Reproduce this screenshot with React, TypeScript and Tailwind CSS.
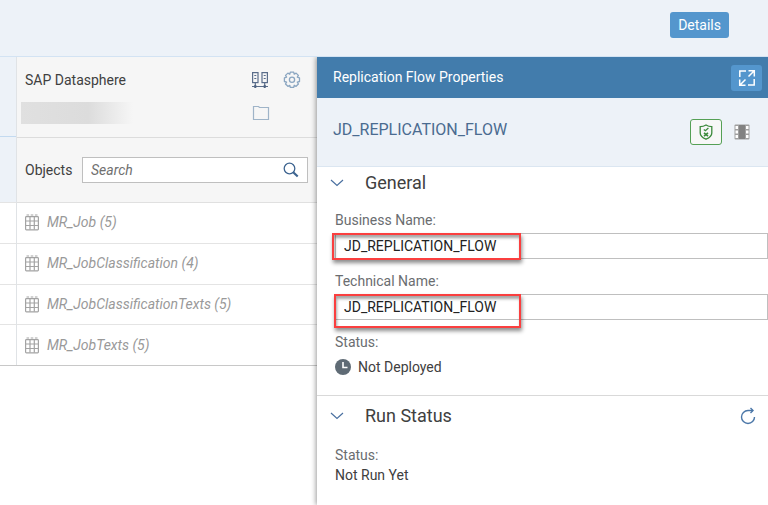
import type { ReactNode } from 'react'

const objects = ['MR_Job (5)', 'MR_JobClassification (4)', 'MR_JobClassificationTexts (5)', 'MR_JobTexts (5)']

function TableIcon() {
  return (
    <svg width="14" height="17" viewBox="0 0 14 17" fill="none" stroke="#a3a3a3" strokeWidth="1.2">
      <path d="M1.5 1h2.6M5.700 1h2.600M9.900 1h2.600" />
      <rect x="0.6" y="2.6" width="12.8" height="13.2" rx="0.8" />
      <path d="M0.5 7h13M0.5 11.500h13M5 2.600v13M9.300 2.600v13" />
    </svg>
  )
}

function ConnectionIcon() {
  return (
    <svg width="18" height="17" viewBox="0 0 18 17" fill="none" stroke="#5a6d8a" strokeWidth="1.2">
      <rect x="1.600" y="0.6" width="5.400" height="10" />
      <rect x="11" y="0.6" width="5.400" height="10" />
      <path d="M3.300 3.500h2M3.300 6.500h2M12.700 3.500h2M12.700 6.500h2M4.300 10.500v4M13.700 10.500v4M1 14.500h16" />
      <path d="M3.300 13h2v3h-2zM12.700 13h2v3h-2z" fill="#4f6380" stroke="none" />
    </svg>
  )
}

function GearIcon() {
  return (
    <svg width="18" height="18" viewBox="0 0 18 18" fill="none" stroke="#8ba6c1" strokeWidth="1.3" strokeLinejoin="round">
      <path d="M7.3 1.2h3.4l.5 2 1.9-1.1 2.3 2.3-1.1 1.8 2.2.7v3.6l-2.2.6 1.1 1.9-2.3 2.3-1.900-1-.5 2.100H7.300l-.5-2.100-1.900 1-2.400-2.300 1.100-1.900-2.200-.6V6.900l2.200-.7-1.100-1.800 2.400-2.300 1.900 1.100z" />
      <circle cx="9" cy="8.8" r="2.6" />
    </svg>
  )
}

function FolderIcon() {
  return (
    <svg width="18" height="16" viewBox="0 0 18 16" fill="none" stroke="#9fb4c8" strokeWidth="1.2">
      <path d="M1.500 14.500v-13h5l1 1h9v12z" />
    </svg>
  )
}

function SearchIcon() {
  return (
    <svg width="16" height="16" viewBox="0 0 16 16" fill="none" stroke="#3d6490">
      <circle cx="6.5" cy="6.5" r="5.3" strokeWidth="1.300" />
      <path d="M10.200 10.200l4.500 4.300" strokeWidth="2.200" />
    </svg>
  )
}

function ExpandIcon() {
  return (
    <svg width="18" height="18" viewBox="0 0 18 18" fill="none" stroke="#fff" strokeWidth="1.5">
      <path d="M8 2H1.800v6M10 16h6.200v-6" />
      <path d="M10.500 1.700h5.800v5.800M16 2l-5.500 5.500M7.500 16.300H1.700v-5.800M2 16l5.500-5.500" />
    </svg>
  )
}

function ShieldIcon() {
  return (
    <svg width="14" height="16" viewBox="0 0 14 16" fill="none" stroke="#3b8a3b" strokeWidth="1.3">
      <path d="M7 1c2 1.3 3.800 1.700 5.800 1.700V9c0 3-2.500 4.800-5.800 6.200C3.700 13.800 1.200 12 1.200 9V2.700C3.200 2.700 5 2.300 7 1z" />
      <path d="M4.800 5.400l1.600 1.300 3-2.700" />
      <path d="M5 8.800l4 3.400M9 8.800l-4 3.400" strokeWidth="1.600" />
    </svg>
  )
}

function FilmIcon() {
  return (
    <svg width="16" height="16" viewBox="0 0 16 16">
      <rect x="0.5" y="0.5" width="15" height="15" rx="1" fill="#a0a0a0" />
      <path d="M5 1h6v14H5z" fill="#828282" />
      <path d="M1.500 2h2.500v3H1.500zM1.500 6.500h2.500v3H1.500zM1.500 11h2.500v3H1.500zM12 2h2.500v3h-2.500zM12 6.500h2.500v3h-2.500zM12 11h2.500v3h-2.500z" fill="#fff" />
    </svg>
  )
}

function ChevronIcon() {
  return (
    <svg width="14" height="8" viewBox="0 0 14 8" fill="none" stroke="#4a70a0" strokeWidth="1.2">
      <path d="M1 1l6 5.500L13 1" />
    </svg>
  )
}

function RefreshIcon() {
  return (
    <svg width="16" height="18" viewBox="0 0 16 18" fill="none" stroke="#4b77a8" strokeWidth="1.4">
      <path d="M13 3.500H8a6.500 6.500 0 1 0 6.500 6.500" />
      <path d="M10.500 1l2.500 2.500L10.500 6" />
    </svg>
  )
}

function ClockIcon() {
  return (
    <svg width="16" height="16" viewBox="0 0 16 16">
      <circle cx="8" cy="8" r="8" fill="#5f6b75" />
      <path d="M8 3v5.500h4.500" fill="none" stroke="#fff" strokeWidth="1.6" />
    </svg>
  )
}

function SectionTitle({ title, children }: { title: string; children?: ReactNode }) {
  return (
    <div className="flex h-[31px] items-center px-3">
      <button aria-label={`Toggle ${title}`} className="flex w-4 justify-center">
        <ChevronIcon />
      </button>
      <h2 className="ml-5 flex-1 text-[18px] leading-6">{title}</h2>
      {children}
    </div>
  )
}

function Field({ id, label, mark }: { id: string; label: string; mark: string }) {
  return (
    <div className="flex flex-col">
      <label htmlFor={id} className="leading-5 text-[#6a6d70]">
        {label}
      </label>
      <div className="relative mt-[3px]">
        <input
          id={id}
          defaultValue="JD_REPLICATION_FLOW"
          className="block h-[26px] w-full border border-[#bfbfbf] bg-white px-2 text-[#222]"
        />
        <div className={mark} />
      </div>
    </div>
  )
}

export default function App() {
  return (
    <div className="flex min-h-screen flex-col bg-white font-['Roboto',sans-serif] text-[14px] text-[#404040]">
      <header className="flex h-[57px] items-start justify-end border-b border-[#d3e3f3] bg-[#edf2f8] pt-3 pr-[39px]">
        <button className="h-[26px] rounded-[3px] bg-[#5496cd] px-2 text-white">Details</button>
      </header>

      <div className="flex flex-1">
        <main className="flex w-[317px] shrink-0 flex-col">
          <div className="flex border-b border-[#c8c8c8]">
            {/* Source column, scrolled almost out of view */}
            <div className="flex w-[17px] flex-col border-r border-[#e0e3e6]">
              <div className="h-20 border-b border-[#c3daf0] bg-[#edf2f8]" />
              <div className="h-[66px] border-b border-[#e4e4e4] bg-[#edf2f8]" />
              <div className="h-[41px] border-b border-[#e4e4e4]" />
              <div className="h-[41px] border-b border-[#e4e4e4]" />
              <div className="h-10 border-b border-[#e4e4e4]" />
              <div className="h-10" />
            </div>

            <div className="flex flex-1 flex-col">
              <div className="flex h-[81px] flex-col gap-3 border-b border-[#dcdcdc] bg-[#f6f6f6] pt-[13px] pr-4 pl-2">
                <div className="flex items-center">
                  <h1 className="flex-1 leading-5">SAP Datasphere</h1>
                  <button aria-label="Select connection">
                    <ConnectionIcon />
                  </button>
                  <button aria-label="Settings" className="ml-[14px]">
                    <GearIcon />
                  </button>
                </div>
                <div className="flex items-center justify-between pr-[31px]">
                  <div className="-ml-1 h-[22px] w-28 bg-linear-to-r from-[#e0e0e0] via-[#dcdcdc] via-60% to-[#f6f6f6]" />
                  <button aria-label="Select container">
                    <FolderIcon />
                  </button>
                </div>
              </div>

              <div className="flex h-[65px] items-center border-b border-[#e0e0e0] bg-[#f6f6f6] pr-[9px] pl-2">
                <label htmlFor="search" className="w-[57px]">
                  Objects
                </label>
                <div className="flex h-[26px] flex-1 items-center border border-[#bfbfbf] bg-white px-2">
                  <input
                    id="search"
                    placeholder="Search"
                    className="min-w-0 flex-1 italic outline-none placeholder:text-[#707070]"
                  />
                  <button aria-label="Search">
                    <SearchIcon />
                  </button>
                </div>
              </div>

              <ul className="flex flex-1 flex-col divide-y divide-[#e4e4e4]">
                {objects.map((name) => (
                  <li key={name} className="flex flex-1 items-center gap-2 pl-2 text-[#999] italic">
                    <TableIcon />
                    {name}
                  </li>
                ))}
              </ul>
            </div>
          </div>
        </main>

        <aside className="relative flex min-w-0 flex-1 flex-col bg-white shadow-[-1px_0_5px_rgba(0,0,0,0.4)] [clip-path:inset(0_0_0_-12px)]">
          <div className="flex h-[41px] items-center justify-between bg-[#427cac] pr-[6px] pl-4 text-white">
            <h2>Replication Flow Properties</h2>
            <button
              aria-label="Expand"
              className="flex h-[26px] w-[31px] items-center justify-center rounded-[3px] bg-[#5496cd]"
            >
              <ExpandIcon />
            </button>
          </div>

          <div className="flex h-[69px] items-center border-b border-[#dbe6f1] bg-[#edf2f8] pr-[18px] pl-4">
            <h3 className="flex-1 pb-1 text-[16px] text-[#4a6b90]">JD_REPLICATION_FLOW</h3>
            <button
              aria-label="Validate"
              className="flex h-[26px] w-8 items-center justify-center rounded-[3px] border border-[#55a055] bg-[#f7f7f7]"
            >
              <ShieldIcon />
            </button>
            <button aria-label="Data preview" className="ml-3">
              <FilmIcon />
            </button>
          </div>

          <section className="flex flex-col border-b border-[#d9d9d9]">
            <SectionTitle title="General" />
            <div className="flex flex-col gap-3 pt-3 pb-[18px] pl-[18px]">
              <Field
                id="business-name"
                label="Business Name:"
                mark="pointer-events-none absolute top-0 -left-[3px] h-[27px] w-[189px] border-2 border-[#fa3f3f] shadow-[1px_3px_4px_rgba(0,0,0,0.45),inset_1px_3px_3px_rgba(0,0,0,0.35)]"
              />
              <Field
                id="technical-name"
                label="Technical Name:"
                mark="pointer-events-none absolute top-0 -left-px h-[34px] w-[187px] border-2 border-[#fa3f3f] shadow-[1px_3px_4px_rgba(0,0,0,0.45),inset_1px_3px_3px_rgba(0,0,0,0.35)]"
              />
              <div>
                <div className="leading-5 text-[#6a6d70]">Status:</div>
                <div className="mt-[5px] flex items-center gap-[7px] leading-5">
                  <ClockIcon />
                  Not Deployed
                </div>
              </div>
            </div>
          </section>

          <section className="flex flex-col pt-1">
            <SectionTitle title="Run Status">
              <button aria-label="Refresh">
                <RefreshIcon />
              </button>
            </SectionTitle>
            <div className="pt-[14px] pl-[18px] leading-5">
              <div className="text-[#6a6d70]">Status:</div>
              <div>Not Run Yet</div>
            </div>
          </section>
        </aside>
      </div>
    </div>
  )
}
